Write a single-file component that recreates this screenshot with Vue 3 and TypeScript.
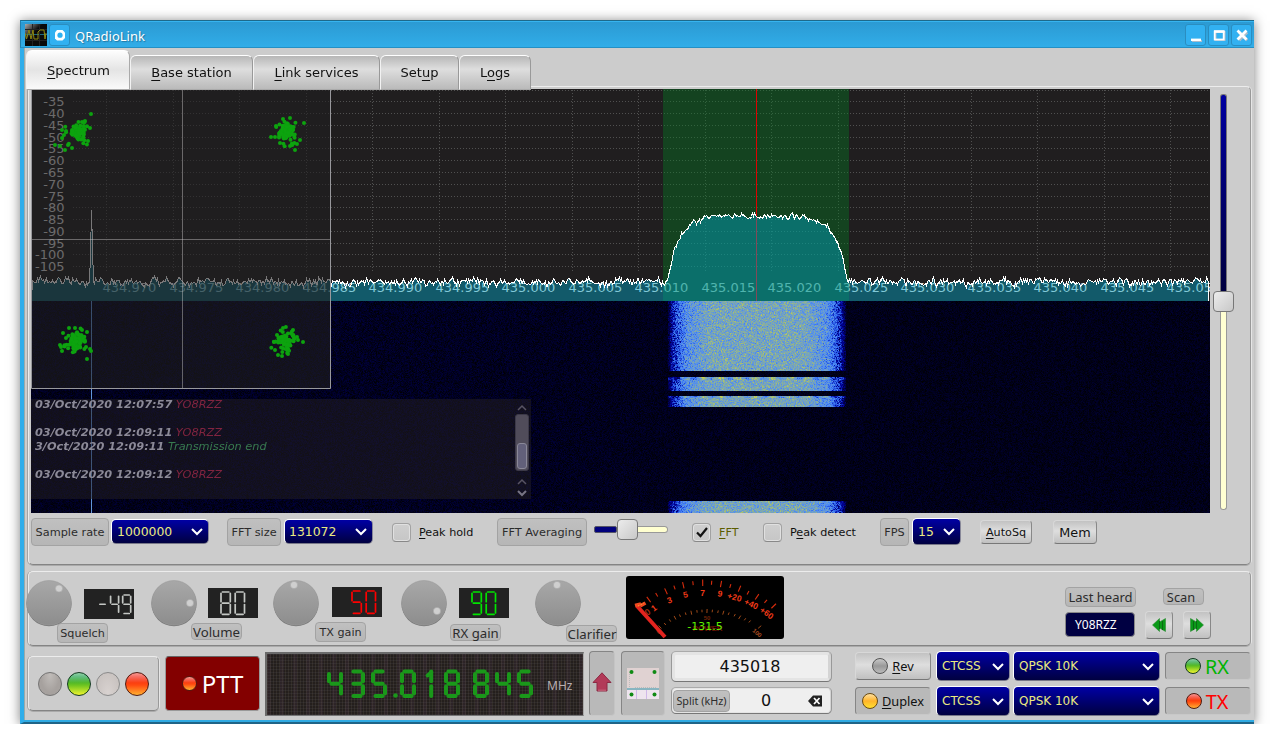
<script setup lang="ts">
import { onMounted, ref } from 'vue'

type Line = { x1: number; y1: number; x2: number; y2: number }
type Dot = { x: number; y: number }

function makeRandom(seed: number): () => number {
  let s = seed
  return () => {
    s = (s + 0x6d2b79f5) | 0
    let t = Math.imul(s ^ (s >>> 15), 1 | s)
    t = (t + Math.imul(t ^ (t >>> 7), 61 | t)) ^ t
    return ((t ^ (t >>> 14)) >>> 0) / 4294967296
  }
}

const tabs = [
  { key: 'S', rest: 'pectrum', cls: 'tab-spectrum active' },
  { key: 'B', rest: 'ase station', cls: 'tab-base' },
  { key: 'L', rest: 'ink services', cls: 'tab-link' },
  { pre: 'Set', key: 'u', rest: 'p', cls: 'tab-setup' },
  { pre: 'L', key: 'o', rest: 'gs', cls: 'tab-logs' },
]

/* Spectrum plot: 1179 x 212 */
const dbRows = Array.from({ length: 16 }, (_, i) => ({
  y: Math.floor(90 + i * 11.78) - 89 + 0.5,
  label: i === 0 ? '' : String(-30 - i * 5),
}))
const freqCols = Array.from({ length: 17 }, (_, i) => ({
  x: Math.round(106 + i * 66.5) - 31 + 0.5,
  label: (434.97 + i * 0.005).toFixed(3),
}))

function buildTrace(): string {
  const rnd = makeRandom(77)
  const pts: string[] = []
  let n = 0
  for (let x = 1; x <= 1177; x++) {
    const px = x + 31
    n = n * 0.35 + (rnd() + rnd() + rnd() - 1.5) * 0.9
    let y = 192.4 + n * 4.4
    if (px >= 667 && px <= 847) {
      const d = Math.min(px - 667, 847 - px)
      const top = 126.3 + 66 * Math.exp(-d / 11.5)
      y = top + n * (d > 3 ? 3.4 : 2)
    }
    if (px === 90) y = 165
    if (px === 91) y = 120.5
    if (px === 92) y = 157
    pts.push(`${x}.5,${(Math.round(y) + 0.5).toFixed(1)}`)
  }
  return pts.join(' ')
}
const trace = buildTrace()
const fillPoints = `0.5,212 ${trace} 1178,212`
const outline = `0.5,212 ${trace} 1177.5,212`

/* Constellation view: 300 x 300 */
function cluster(seed: number, cx: number, cy: number, extra: number[][]): Dot[] {
  const rnd = makeRandom(seed)
  const dots: Dot[] = []
  for (let i = 0; i < 72; i++) {
    const gx = rnd() + rnd() + rnd() + rnd() - 2
    const gy = rnd() + rnd() + rnd() + rnd() - 2
    dots.push({ x: cx + gx * 8.5, y: cy + gy * 9.5 })
  }
  for (const [x, y] of extra) dots.push({ x: x - 31, y: y - 89 })
  return dots
}
const constellation: Dot[] = [
  ...cluster(5, 47, 44, [[91, 114], [90, 128], [85, 121], [82, 122], [62, 130], [55, 145], [60, 146], [65, 150], [72, 148], [62, 138], [66, 131], [64, 135], [88, 141], [68, 145]]),
  ...cluster(9, 255, 43, [[290, 118], [304, 123], [295, 150], [271, 137], [275, 137], [300, 140], [297, 144], [283, 119], [276, 126], [280, 143], [290, 146]]),
  ...cluster(14, 45, 253, [[69, 328], [75, 328], [63, 333], [60, 345], [61, 347], [62, 351], [87, 359], [87, 332], [82, 330], [90, 349], [91, 351], [66, 338], [86, 347]]),
  ...cluster(21, 254, 253, [[283, 328], [293, 330], [303, 342], [274, 342], [278, 355], [282, 356], [288, 354], [297, 337], [277, 335], [275, 350], [298, 340]]),
]

/* Waterfall */
const waterfall = ref<HTMLCanvasElement | null>(null)
const palette: number[][] = [
  [0, 0, 0],
  [0, 0, 60],
  [0, 0, 150],
  [40, 90, 230],
  [76, 138, 246],
  [112, 160, 200],
  [146, 180, 140],
  [205, 212, 70],
]
function shade(v: number): number[] {
  const p = Math.max(0, Math.min(6.999, v))
  const i = Math.floor(p)
  const f = p - i
  return palette[i].map((c, k) => c + (palette[i + 1][k] - c) * f)
}
onMounted(() => {
  const cv = waterfall.value
  const ctx = cv?.getContext('2d')
  if (!cv || !ctx) return
  const w = 1179
  const h = 212
  const img = ctx.createImageData(w, h)
  const rnd = makeRandom(2020)
  for (let y = 0; y < h; y++) {
    const burst = y < 70 || (y >= 76 && y < 90) || (y >= 95 && y < 106) || y >= 200
    const edgeRow = (y >= 76 && y < 79) || (y >= 95 && y < 97)
    for (let x = 0; x < w; x++) {
      const px = x + 31
      let v: number
      const d = Math.min(px - 668, 845 - px)
      if (burst && d >= 0) {
        const level = d < 5 ? 1 + d * 0.3 : d < 18 ? 2.4 + (d - 5) * 0.14 : Math.min(5.2, 4.2 + (d - 18) * 0.045)
        v = level + (rnd() + rnd() - 1) * (d < 5 ? 0.9 : 1.5)
        if (edgeRow) v += Math.sin(px * 0.36) * 0.9
      } else {
        const near = Math.exp(-Math.pow((px - 400) / 260, 2))
        v = (rnd() + rnd() * 0.6) * (0.52 + near * 0.16)
      }
      if (px === 91) v = 4.3 + rnd() * 0.5
      const c = shade(v)
      const o = (y * w + x) * 4
      img.data[o] = c[0]
      img.data[o + 1] = c[1]
      img.data[o + 2] = c[2]
      img.data[o + 3] = 255
    }
  }
  ctx.putImageData(img, 0, 0)
})

const chat = [
  { time: '03/Oct/2020 12:07:57', text: 'YO8RZZ', kind: 'call' },
  { time: '', text: '', kind: '' },
  { time: '03/Oct/2020 12:09:11', text: 'YO8RZZ', kind: 'call' },
  { time: '3/Oct/2020 12:09:11', text: 'Transmission end', kind: 'end' },
  { time: '', text: '', kind: '' },
  { time: '03/Oct/2020 12:09:12', text: 'YO8RZZ', kind: 'call' },
]

/* Segment displays */
const segmentMap: Record<string, string> = {
  '0': 'abcdef', '3': 'abcdg', '4': 'bcfg', '5': 'acdfg', '8': 'abcdefg', '9': 'abcdfg', '-': 'g',
}
function segments(ch: string, x: number, y: number, w: number, h: number, gap: number): Line[] {
  if (ch === '1') {
    return [
      { x1: x + w * 0.6, y1: y, x2: x + w * 0.6, y2: y + h / 2 - gap },
      { x1: x + w * 0.6, y1: y + h / 2 + gap, x2: x + w * 0.6, y2: y + h },
      { x1: x + w * 0.3, y1: y + 4, x2: x + w * 0.6, y2: y + 1 },
    ]
  }
  const m = y + h / 2
  const all: Record<string, Line> = {
    a: { x1: x + gap, y1: y, x2: x + w - gap, y2: y },
    b: { x1: x + w, y1: y + gap, x2: x + w, y2: m - gap },
    c: { x1: x + w, y1: m + gap, x2: x + w, y2: y + h - gap },
    d: { x1: x + gap, y1: y + h, x2: x + w - gap, y2: y + h },
    e: { x1: x, y1: m + gap, x2: x, y2: y + h - gap },
    f: { x1: x, y1: y + gap, x2: x, y2: m - gap },
    g: { x1: x + gap, y1: m, x2: x + w - gap, y2: m },
  }
  return (segmentMap[ch] ?? '').split('').map((k) => all[k])
}
function lcdLines(text: string, x: number, y: number, w: number, h: number, pitch: number): Line[] {
  return text.split('').flatMap((ch, i) => segments(ch, x + i * pitch, y, w, h, 1.4))
}
const dials = [
  { cls: 'squelch', label: 'Squelch', value: '-49', dx: 33, dy: 8.5, color: '#c4c7c4', lines: lcdLines('-49', 14.5, 6, 8, 18.5, 12.1) },
  { cls: 'volume', label: 'Volume', value: '80', dx: 39, dy: 23, color: '#c4c7c4', lines: lcdLines('80', 13, 4, 9.3, 22.3, 14.2) },
  { cls: 'txgain', label: 'TX gain', value: '50', dx: 21, dy: 5, color: '#ff0000', lines: lcdLines('50', 20, 4, 9.3, 22.3, 14.2) },
  { cls: 'rxgain', label: 'RX gain', value: '90', dx: 36, dy: 31, color: '#00e400', lines: lcdLines('90', 13, 4, 9.3, 22.3, 14.2) },
  { cls: 'clarifier', label: 'Clarifier', value: '', dx: 22, dy: 5, color: '', lines: [] as Line[] },
]
const freqDigits: Line[] = [
  ['4', 62], ['3', 84], ['5', 106], ['0', 135], ['1', 157], ['8', 179], ['8', 208], ['4', 230], ['5', 252],
].flatMap(([ch, x]) => segments(String(ch), Number(x), 17.5, 12, 24.5, 2.4))

/* S-meter: 158 x 63 */
function tick(x: number, y: number, half: number): Line {
  const dx = x - 78
  const dy = y - 98
  const l = Math.hypot(dx, dy)
  return { x1: x - (dx / l) * half, y1: y - (dy / l) * half, x2: x + (dx / l) * half, y2: y + (dy / l) * half }
}
const outerTicks = [
  [22.7, 23.5], [30.7, 18.7], [40, 15.3], [48.5, 11.5], [57.3, 9.3], [67, 7.2], [76.7, 6.7], [85.6, 6.7],
  [95, 8], [104.3, 10], [113.5, 12.7], [122, 16.7], [131, 20.8], [139.7, 25.3], [147.7, 30],
].map(([x, y], i) => tick(x, y, i % 2 ? 2 : 3.2))
const innerTicks = [
  [34, 51], [39, 48], [44, 44.5], [49, 41.7], [54, 39.7], [59.7, 37.7], [65.3, 36.7], [71, 35.4], [76, 35], [81, 35],
  [86.3, 35], [92, 35.7], [97.3, 36.7], [102.7, 37.7], [108.7, 39.2], [113.7, 41.3], [119, 43.3], [123.7, 45.5], [133.7, 51],
].map(([x, y], i) => tick(x, y, i % 3 === 0 ? 2 : 1.3))
const meterLabels = [
  { t: '1', x: 28, y: 32, r: -36 },
  { t: '3', x: 43.5, y: 24, r: -20 },
  { t: '5', x: 59.5, y: 18.7, r: -12 },
  { t: '7', x: 76.7, y: 16.7, r: 0 },
  { t: '9', x: 94, y: 17.7, r: 8 },
  { t: '+20', x: 108.5, y: 21.2, r: 14 },
  { t: '+40', x: 125.2, y: 28, r: 24 },
  { t: '+60', x: 140.7, y: 37, r: 36 },
]
const radios = [
  { cls: 'rx', label: 'RX', led: 'green' },
  { cls: 'tx', label: 'TX', led: 'red' },
]
</script>

<template>
  <div class="window">
    <header class="titlebar">
      <svg class="app-icon" width="22" height="22" viewBox="0 0 22 22">
        <defs>
          <linearGradient id="gloss" x1="0" y1="0" x2="1" y2="1">
            <stop offset="0" stop-color="#aaa" />
            <stop offset=".4" stop-color="#0a0a0a" />
          </linearGradient>
        </defs>
        <rect width="22" height="22" fill="url(#gloss)" />
        <path d="M0 10.5H22" stroke="#1d6a80" />
        <path d="M7.5 0V22M14.500 0V22M0 5.500H22M0 16.500H22" stroke="#222" />
        <path d="M0 9l1.500 6 2.500-9 2 9 2-9 1 9h4V8l2-2h4l1 9 1-6" fill="none" stroke="#8f8a10" />
      </svg>
      <span class="tbtn tmenu">
        <svg width="20" height="20"><path d="M7 5h5.500l2.500 2.500v5.500l-2.500 2.500h-5.500l-2-2v-6z" fill="#fff" /><circle cx="10" cy="10.200" r="2.600" fill="#30b0f0" /></svg>
      </span>
      <span class="title">QRadioLink</span>
      <span class="spacer"></span>
      <span class="tbtn"><svg width="20" height="20"><path d="M6 16h10" stroke="#a9bccb" stroke-width="2" /><path d="M5 14.800h10" stroke="#fff" stroke-width="2.400" /></svg></span>
      <span class="tbtn"><svg width="20" height="20"><rect x="6.500" y="7" width="9" height="8" fill="none" stroke="#a9bccb" stroke-width="2" /><rect x="5.700" y="6.500" width="9" height="8" fill="none" stroke="#fff" stroke-width="1.800" /><path d="M5 6.500h10.500" stroke="#fff" stroke-width="2.500" /></svg></span>
      <span class="tbtn"><svg width="20" height="20"><path d="M6.500 6.500l8 8m0-8l-8 8" stroke="#a9bccb" stroke-width="3" transform="translate(.7 .8)" /><path d="M5.500 5.500l9 9m0-9l-9 9" stroke="#fff" stroke-width="2.800" /></svg></span>
    </header>

    <nav class="tabs">
      <div v-for="t in tabs" :key="t.rest" class="tab" :class="t.cls"><span>{{ t.pre }}<u>{{ t.key }}</u>{{ t.rest }}</span></div>
    </nav>

    <section class="pane frame">
      <div class="view-row">
        <div class="screen">
          <svg class="plot" width="1179" height="212" viewBox="0 0 1179 212">
            <rect width="1179" height="212" fill="#201e1f" />
            <g stroke="#505050" stroke-dasharray="1 2" shape-rendering="crispEdges">
              <line v-for="r in dbRows" :key="'h' + r.y" x1="42" :y1="r.y" x2="1179" :y2="r.y" />
              <line v-for="c in freqCols" :key="'v' + c.x" :x1="c.x" y1="1" :x2="c.x" y2="184" />
            </g>
            <g class="axis-text" fill="#dcdcdc">
              <text v-for="r in dbRows" :key="'t' + r.y" x="33.500" :y="r.y + 4.500" text-anchor="end">{{ r.label }}</text>
              <text v-for="c in freqCols" :key="'f' + c.x" :x="c.x - 4" y="203">{{ c.label }}</text>
            </g>
            <rect x="632" y="0" width="186" height="212" fill="rgba(2,130,35,.38)" />
            <rect x="725" y="0" width="1" height="212" fill="#e00000" />
            <polygon :points="fillPoints" fill="rgba(0,173,209,.42)" />
            <polyline :points="outline" fill="none" stroke="#fff" stroke-width="1" shape-rendering="crispEdges" />
          </svg>
          <canvas ref="waterfall" class="waterfall" width="1179" height="212"></canvas>

          <svg class="constellation" width="300" height="300" viewBox="0 0 300 300">
            <rect width="300" height="300" fill="rgba(32,30,31,.6)" />
            <path d="M151.500 0V299M0 150.500H299" stroke="rgba(200,200,200,.45)" />
            <path d="M.5 0V299.500H299.500V0" fill="none" stroke="#98989c" />
            <circle v-for="(d, i) in constellation" :key="i" :cx="d.x" :cy="d.y" r="2" fill="#0da30f" />
          </svg>

          <div class="chat">
            <div class="chat-lines">
              <p v-for="(c, i) in chat" :key="i"><b>{{ c.time }}</b> <i :class="c.kind">{{ c.text }}</i></p>
            </div>
            <div class="scrollbar">
              <svg width="10" height="7"><path d="M1 6l4-4 4 4" fill="none" stroke="#585464" stroke-width="1.500" /></svg>
              <div class="track"><div class="thumb"></div></div>
              <svg width="10" height="7"><path d="M1 6l4-4 4 4" fill="none" stroke="#585464" stroke-width="1.500" /></svg>
              <svg class="down" width="10" height="7"><path d="M1 1l4 4 4-4" fill="none" stroke="#777484" stroke-width="2" /></svg>
            </div>
          </div>
        </div>
        <div class="vslider">
          <div class="v-upper"></div>
          <div class="knob-handle"></div>
          <div class="v-lower"></div>
        </div>
      </div>

      <div class="controls">
        <span class="tag t-rate">Sample rate</span>
        <div class="combo c-rate"><span>1000000</span><svg width="14" height="9"><path d="M2 2l5 5 5-5" /></svg></div>
        <span class="tag t-size">FFT size</span>
        <div class="combo c-size"><span>131072</span><svg width="14" height="9"><path d="M2 2l5 5 5-5" /></svg></div>
        <span class="check k-hold"></span><span class="ctext x-hold"><u>P</u>eak hold</span>
        <span class="tag t-avg">FFT Averaging</span>
        <div class="hslider"><div class="h-left"></div><div class="knob-handle"></div><div class="h-right"></div></div>
        <span class="check k-fft"><svg width="17" height="17"><path d="M4 8.500l3.500 3.500L14 4" fill="none" stroke="#111" stroke-width="2.200" /></svg></span><span class="ctext x-fft"><u>F</u>FT</span>
        <span class="check k-detect"></span><span class="ctext x-detect">P<u>e</u>ak detect</span>
        <span class="tag t-fps">FPS</span>
        <div class="combo c-fps"><span>15</span><svg width="14" height="9"><path d="M2 2l5 5 5-5" /></svg></div>
        <button class="btn b-auto"><span><u>A</u>utoSq</span></button>
        <button class="btn b-mem">Mem</button>
      </div>
    </section>

    <section class="dials frame">
      <div v-for="d in dials" :key="d.cls" class="dial" :class="d.cls">
        <div class="dial-top">
          <svg width="46" height="47" viewBox="0 0 46 47">
            <defs>
              <linearGradient id="dialFace" x1="0" y1="0" x2="0" y2="1">
                <stop offset="0" stop-color="#a8a8a8" />
                <stop offset="1" stop-color="#8d8d8d" />
              </linearGradient>
            </defs>
            <circle cx="23" cy="23.700" r="22.600" fill="#777" />
            <circle cx="23" cy="22.800" r="22.300" fill="url(#dialFace)" stroke="#9c9c9c" stroke-width=".6" />
            <circle :cx="d.dx" :cy="d.dy" r="3.600" fill="#cfcfcf" stroke="#aaa" stroke-width=".6" />
          </svg>
          <svg v-if="d.value" class="lcd" width="50" height="30" role="img" :aria-label="d.value">
            <rect width="50" height="30" fill="#222" />
            <line v-for="(l, i) in d.lines" :key="i" v-bind="l" :stroke="d.color" stroke-width="1.700" stroke-linecap="round" />
          </svg>
        </div>
        <span class="tag dial-label">{{ d.label }}</span>
      </div>

      <svg class="meter" width="158" height="63" viewBox="0 0 158 63">
        <rect width="158" height="63" rx="3" fill="#000" />
        <g stroke="#d82c0c" stroke-width="1.100"><line v-for="(l, i) in outerTicks" :key="i" v-bind="l" /></g>
        <g stroke="#a04a18" stroke-width="1"><line v-for="(l, i) in innerTicks" :key="i" v-bind="l" /></g>
        <g class="meter-text" fill="#f03a18" font-size="8.500">
          <text v-for="m in meterLabels" :key="m.t" :transform="`translate(${m.x} ${m.y}) rotate(${m.r})`" y="3">{{ m.t }}</text>
        </g>
        <g class="meter-text" fill="#8a3414" font-size="6">
          <text x="81" y="43.500" fill="#702408">50</text>
          <text x="81.500" y="54.500" font-size="8" fill="#6a1404">POWER</text>
          <text transform="translate(131 57) rotate(40)" y="2" fill="#a84c20">100</text>
          <text transform="translate(21.500 36) rotate(-35)" y="3" font-size="9" fill="#a02c10">0</text>
          <text transform="translate(33 56) rotate(-35)" y="2" font-size="7">0</text>
        </g>
        <path d="M11 30L39 61" stroke="#e3241f" stroke-width="4" />
        <path d="M9 29.500l6-1.500M14 30l5.500-3" stroke="#f04a20" stroke-width="3.600" />
        <path d="M12 30l6-3" stroke="#f8a030" stroke-width="1" stroke-dasharray="1.500 1.500" />
        <text class="meter-value" x="79" y="54" text-anchor="middle" fill="#5cf000">-131.5</text>
      </svg>

      <div class="heard">
        <span class="tag">Last heard</span>
        <div class="callsign">Y08RZZ</div>
      </div>
      <div class="scan">
        <span class="tag">Scan</span>
        <div class="scan-buttons">
          <button class="btn"><svg width="14" height="14" viewBox="0 0 14 14"><path d="M7.500 0.500L0.500 7l7 6.500V10l6 3.500V.5l-6 3.500z" fill="#0a9a18" stroke="#2f8a36" stroke-width=".6" /><path d="M7.500 3v8M10.500 3v9" stroke="#0b6a14" /></svg></button>
          <button class="btn"><svg width="14" height="14" viewBox="0 0 14 14"><path d="M6.500 0.500L13.500 7l-7 6.500V10l-6 3.500V.5l6 3.500z" fill="#0a9a18" stroke="#2f8a36" stroke-width=".6" /><path d="M6.500 3v8M3.500 3v9" stroke="#0b6a14" /></svg></button>
        </div>
      </div>
    </section>

    <footer class="bottom">
      <div class="leds frame">
        <i class="led gray"></i><i class="led green"></i><i class="led pale"></i><i class="led red"></i>
      </div>
      <button class="ptt"><i class="led red small"></i><span>PTT</span></button>
      <div class="freq">
        <svg width="277" height="60" role="img" aria-label="435.018 845">
          <line v-for="(l, i) in freqDigits" :key="i" v-bind="l" stroke="#1a981a" stroke-width="4" stroke-linecap="round" />
          <circle cx="128.500" cy="41.500" r="2.300" fill="#1a981a" />
        </svg>
        <span>MHz</span>
      </div>
      <div class="sunken b-up"><svg width="20" height="20" viewBox="0 0 20 20"><path d="M10 .8l9 9.700h-4V19H5v-8.500H1z" fill="#b23a58" stroke="#8c2a44" /><path d="M6 18.200h8" stroke="#c86a80" /></svg></div>
      <div class="sunken b-const">
        <svg width="32" height="31" viewBox="0 0 32 31">
          <rect width="32" height="20" fill="#e0d2d2" /><rect y="22" width="32" height="9" fill="#eee4ee" /><path d="M0 21H32" stroke="#58b0c8" />
          <path d="M2.500 4V19M8 19.500H30" stroke="#bbb" stroke-dasharray="1 1" /><path d="M9.500 22v9M19.500 22v9" stroke="#d0b8e8" />
          <g fill="#108a14"><circle cx="4.500" cy="4" r="2" /><circle cx="27.500" cy="4" r="2" /><circle cx="4.500" cy="26.500" r="2" /><circle cx="27.500" cy="26.500" r="2" /></g>
        </svg>
      </div>
      <div class="entries">
        <div class="entry main-entry"><span>435018</span></div>
        <div class="entry split-entry">
          <span class="tag">Split (kHz)</span><span class="num">0</span>
          <svg width="14" height="12" viewBox="0 0 14 12"><path d="M0 6L5 0.500h9v11H5z" fill="#222" /><path d="M6 3l5.500 6m0-6L6 9" stroke="#fff" stroke-width="1.700" /></svg>
        </div>
      </div>
      <div class="col modes">
        <button class="btn"><i class="led off mid"></i><span><u>R</u>ev</span></button>
        <div class="sunken"><i class="led amber mid"></i><span><u>D</u>uplex</span></div>
      </div>
      <div class="col tones">
        <div v-for="n in 2" :key="n" class="combo"><span>CTCSS</span><svg width="14" height="9"><path d="M2 2l5 5 5-5" /></svg></div>
      </div>
      <div class="col mods">
        <div v-for="n in 2" :key="n" class="combo"><span>QPSK 10K</span><svg width="14" height="9"><path d="M2 2l5 5 5-5" /></svg></div>
      </div>
      <div class="col radios">
        <div v-for="r in radios" :key="r.cls" class="sunken" :class="r.cls"><i class="led mid" :class="r.led"></i><span>{{ r.label }}</span></div>
      </div>
    </footer>
  </div>
</template>

<style>
html, body { background: #fff; overflow: hidden; }
</style>

<style scoped>
* { box-sizing: border-box; }
svg, canvas { display: block; flex: none; }
u { text-decoration: underline; text-underline-offset: 2px; text-decoration-thickness: 1px; }
.window {
  margin: 20px 0 0 20px; width: 1234px; height: 704px; background: #cccccc;
  border-left: 4px solid #2fadea; border-bottom: 2px solid #1f6487;
  box-shadow: 0 1px 11px rgba(0, 0, 0, .5), inset 0 -2px 0 #30aae2, inset 1px 0 0 #9aa;
  font-family: "DejaVu Sans", sans-serif; font-size: 12px; color: #111;
  display: flex; flex-direction: column;
}
.titlebar {
  flex: none; height: 28px; margin-left: -4px; display: flex; align-items: flex-start;
  background: linear-gradient(#2b99d2, #31ade8); border-top: 1px solid #1d6a8c; border-left: 1px solid #1f7fae; border-bottom: 1px solid #2490c4;
  box-shadow: inset 0 1px 0 #36b4f0; padding: 3px 2px 0 4px;
}
.app-icon { margin-right: 2px; }
.tbtn { width: 21px; height: 22px; background: #32b1f1; border: 1px solid #2a8dc0; border-radius: 3px; margin-right: 2px; }
.tbtn:last-child { margin-right: 0; }
.title { font: 13px/24px "Noto Sans", sans-serif; color: #fff; margin-left: 3px; text-shadow: 1px 1px 1px rgba(0, 0, 0, .3); }
.spacer { flex: 1; }

.tabs { flex: none; height: 42px; display: flex; align-items: flex-end; padding-left: 2px; position: relative; z-index: 1; }
.tab {
  height: 35px; border-radius: 6px 6px 0 0; font-size: 13px; display: flex; align-items: center; justify-content: center;
  background: linear-gradient(#b7b7b7, #dedede 40%, #bababa); border-top: 1.500px solid #fff; border-left: 1px solid #f2f2f2; border-right: 1px solid #999;
  border-bottom: 1px solid #aaa;
}
.tab u { text-underline-offset: 3px; }
.tab.active { height: 40px; background: linear-gradient(#fdfdfd, #e4e4e4 50%, #fafafa); border-right: 1px solid #aaa; padding-left: 1px; }
.tab-spectrum { width: 104px; }
.tab-base { width: 123px; }
.tab-link { width: 127px; }
.tab-setup { width: 79px; }
.tab-logs { width: 72px; }

.frame { border: 1px solid #ececec; border-bottom-color: #848484; border-right-color: #999; border-radius: 5px; box-shadow: 0 1px 0 #aaa, -1px 0 0 #a4a4a4, 1px 0 0 #e6e6e6; }
.pane { flex: none; margin: -4px 0 0 4px; width: 1223px; height: 479px; padding: 2px 0 0 2px; }
.view-row { display: flex; height: 424px; }
.screen { position: relative; width: 1179px; height: 424px; flex: none; }
.axis-text { font: 13px "DejaVu Sans", sans-serif; }
.constellation { position: absolute; left: 0; top: 0; }
.chat {
  position: absolute; left: 0; top: 310px; width: 500px; height: 100px; background: rgba(32, 29, 34, .55);
  display: flex; justify-content: space-between; overflow: hidden;
}
.chat-lines { padding: 0 0 0 4px; margin-top: -1px; font-size: 11.300px; }
.chat p { margin: 0; height: 14px; line-height: 14px; font-style: italic; white-space: pre; color: #8c8a98; }
.chat .call { color: #80243f; }
.chat .end { color: #387a50; }
.scrollbar { width: 14px; margin-right: 2px; padding-top: 5px; display: flex; flex-direction: column; align-items: center; }
.track { width: 14px; height: 57px; margin: 3px 0 7px; background: #504c5a; border: 1px solid #3c3948; border-radius: 3px; display: flex; align-items: flex-end; justify-content: center; padding-bottom: 1px; }
.thumb { width: 10px; height: 26px; border: 1px solid #8a8898; border-radius: 3px; background: #62607a; }
.down { margin-top: 5px; }

.vslider { width: 23px; margin-left: 2px; padding-top: 5px; display: flex; flex-direction: column; align-items: center; }
.v-upper { width: 7px; height: 197px; background: linear-gradient(#0000a0, #000040); border: 1px solid #777; border-radius: 3px 3px 0 0; border-bottom: 0; }
.v-lower { width: 7px; height: 198px; background: #ffffd2; border: 1px solid #999; border-top: 0; border-radius: 0 0 3px 3px; }
.knob-handle { width: 21px; height: 21px; border: 1px solid #777; border-radius: 4px; background: linear-gradient(135deg, #ececec, #c8c8c8); flex: none; }

.controls { display: flex; align-items: center; height: 28px; margin-top: 5px; }
.tag {
  display: flex; align-items: center; justify-content: center; background: linear-gradient(#c0c0c0, #b6b6b6); border: 1px solid #a3a3a3;
  border-radius: 4px; color: #2c2c2c; white-space: nowrap;
}
.controls .tag { height: 28px; font-size: 11.300px; flex: none; }
.t-rate { width: 78px; }
.t-size { width: 54px; margin-left: 18px; }
.t-avg { width: 90px; margin-left: 22px; }
.t-fps { width: 29px; margin-left: 23px; }
.combo {
  display: flex; align-items: center; justify-content: space-between; padding: 0 4px 0 5px; border-radius: 5px; color: #eaea80;
  background: linear-gradient(#0000a4, #000040); border: 1px solid #fff; border-right-color: #889; border-bottom-color: #778; flex: none;
}
.combo path { fill: none; stroke: #fff; stroke-width: 2; }
.controls .combo { height: 25px; margin-left: 2px; margin-top: -1px; font-size: 12.400px; }
.controls .c-rate { width: 98px; }
.controls .c-size { width: 89px; margin-left: 3px; padding-left: 4px; }
.controls .c-fps { width: 49px; height: 27px; margin-left: 3px; }
.check { width: 19px; height: 19px; border: 1px solid #a2a2a2; border-bottom-color: #888; border-radius: 4px; background: linear-gradient(#cfcfcf, #c6c6c6); box-shadow: inset 0 0 0 1px #e0e0e0; flex: none; }
.ctext { font-size: 11.200px; margin-left: 8px; white-space: nowrap; flex: none; }
.x-hold { width: 56px; }
.x-fft { width: 20px; color: #5c5c00; }
.x-detect { width: 67px; }
.k-hold { margin-left: 19px; }
.k-fft { margin-left: 24px; }
.k-detect { margin-left: 24px; }
.hslider { display: flex; align-items: center; width: 74px; margin: -5px 0 0 7px; flex: none; }
.h-left { width: 23px; height: 7px; background: #00007c; border: 1px solid #556; border-radius: 2px; }
.h-right { width: 30px; height: 7px; background: #ffffd0; border: 1px solid #999; border-left: 0; border-radius: 0 4px 4px 0; }
.btn {
  display: flex; align-items: center; justify-content: center; padding: 0; border-radius: 4px; font: 11.200px "DejaVu Sans", sans-serif; color: #111;
  background: linear-gradient(#c2c2c2, #dedede 45%, #c0c0c0); border: 1px solid #d8d8d8; border-bottom-color: #777; border-right-color: #888; flex: none;
}
.b-auto { width: 52px; height: 24px; margin-left: 19px; }
.b-mem { width: 44px; height: 24px; margin-left: 21px; font-size: 12.800px; }

.dials { flex: none; margin: 6px 0 0 4px; width: 1223px; height: 75px; display: flex; align-items: flex-start; padding-top: 8px; }
.dial { flex: none; }
.dial-top { display: flex; align-items: flex-start; height: 47px; }
.lcd { margin: 8px 0 0 12px; }
.dial-label { width: 51px; height: 17px; font: 13.200px "Noto Sans", sans-serif; }
.squelch { width: 125px; margin-left: -3px; }
.squelch .lcd { margin-top: 9px; }
.squelch .dial-label { margin: -4px 0 0 31px; height: 20px; font: 11.200px "DejaVu Sans", sans-serif; }
.volume { width: 122px; }
.volume .lcd { margin-left: 11px; }
.volume .dial-label { margin: -4px 0 0 40px; }
.txgain { width: 128px; }
.txgain .lcd { margin: 7px 0 0 13px; }
.txgain .dial-label { margin: -5px 0 0 42px; height: 20px; font: 11.200px "DejaVu Sans", sans-serif; }
.rxgain { width: 134px; }
.rxgain .dial-label { margin: -3px 0 0 49px; }
.clarifier { width: 91px; }
.clarifier .dial-label { margin: -2px 0 0 31px; padding-left: 1px; }
.meter { margin-top: -4px; }
.meter-text { font-family: "Liberation Sans", sans-serif; font-weight: bold; text-anchor: middle; }
.meter-value { font: 11px "DejaVu Sans", sans-serif; }
.heard { margin: 7px 0 0 281px; width: 72px; }
.heard .tag { height: 20px; width: 71px; font: 13px "Noto Sans", sans-serif; }
.callsign { margin: 5px 0 0 0; width: 70px; height: 25px; background: #000042; border: 1px solid #888; border-radius: 4px; color: #fff; font: 12px/23px "Noto Sans", sans-serif; padding-left: 9px; }
.scan { margin: 7px 0 0 8px; }
.scan .tag { width: 41px; height: 17px; margin: 1px 0 0 18px; font: 12.800px "Noto Sans", sans-serif; padding-right: 5px; }
.scan-buttons { display: flex; gap: 10px; margin-top: 6px; }
.scan-buttons .btn { width: 28px; height: 28px; }

.bottom { flex: none; height: 66px; margin: 5px 0 0 3px; display: flex; align-items: flex-start; }
.leds { width: 131px; height: 55px; margin: 5px 0 0 1px; display: flex; align-items: center; gap: 5px; padding-left: 9px; }
.led { width: 24px; height: 24px; border-radius: 50%; border: 1.500px solid #333; flex: none; }
.led.small { width: 15px; height: 15px; border-width: 1px; }
.led.mid { width: 16px; height: 16px; border-width: 1px; }
.led.gray { background: radial-gradient(ellipse at 50% 10%, #c0bcb9, transparent 60%), #a6a19e; border-color: #757575; }
.led.pale { background: radial-gradient(ellipse at 50% 90%, #d8d2d0, #c4bebb); border-color: #8a8a8a; }
.led.off { background: linear-gradient(#c8c8c8, #999 50%, #bbb); border-color: #555; }
.led.green { background: linear-gradient(rgba(255, 255, 255, .55), transparent 45%), linear-gradient(#109a40 15%, #6cc420 55%, #f0f430); border-color: #123a20; }
.led.red { background: linear-gradient(rgba(255, 255, 255, .55), transparent 45%), linear-gradient(#f02010 15%, #ff4a10 55%, #ffb030); border-color: #501a10; }
.led.amber { background: linear-gradient(#ffe0a0, #ffb42a 50%, #ffe030); border-color: #6a4a10; }
.ptt { width: 95px; height: 55px; margin: 5px 0 0 6px; background: #830000; border: 1px solid #999; border-top-color: #666; border-radius: 4px; color: #fff; font: 24px "Noto Sans", sans-serif; display: flex; align-items: center; justify-content: center; gap: 5px; padding: 0; }
.freq {
  width: 319px; height: 64px; margin: 1px 0 0 5px; border: 2px solid #6a6a6a; border-right: 1px solid #aaa; border-bottom: 1px solid #777; display: flex;
  background-color: #241f1d; color: #b8aeb0; font: 12px "Noto Sans", sans-serif;
  background-image: repeating-linear-gradient(90deg, rgba(120, 110, 90, .17) 0 1px, transparent 1px 3px), repeating-linear-gradient(0deg, rgba(90, 90, 100, .17) 0 1px, transparent 1px 3px), repeating-linear-gradient(90deg, rgba(90, 60, 90, .16) 0 4px, transparent 4px 13px);
}
.freq span { margin-top: 23px; margin-left: 3px; }
.sunken { display: flex; align-items: center; justify-content: center; background: #b9b9b9; border: 1px solid #858585; border-right-color: #c4c4c4; border-bottom-color: #c8c8c8; border-radius: 4px; flex: none; }
.b-up { width: 26px; height: 65px; margin-left: 5px; }
.b-up svg { margin-top: -4px; }
.b-const { width: 44px; height: 65px; margin-left: 6px; }
.entries { margin: 1px 0 0 7px; width: 159px; }
.entry { background: #efefef; border: 3px solid #e4e4e4; border-right-color: #d4d4d4; border-radius: 4px; box-shadow: 0 1px 0 #777, 0 -1px 0 #aaa, 1px 0 0 #999, -1px 0 0 #999; display: flex; align-items: center; font-size: 16px; }
.main-entry { height: 29px; justify-content: center; padding-right: 3px; }
.split-entry { height: 25px; margin-top: 7px; border-width: 1px; }
.split-entry .tag { width: 57px; height: 22px; font: 10.800px "Noto Sans", sans-serif; }
.num { margin-left: 31px; width: 10px; }
.split-entry svg { margin-left: 37px; }
.col { display: flex; flex-direction: column; gap: 5px; }
.modes { margin-left: 24px; width: 76px; gap: 7px; padding-top: 1px; }
.modes > * { height: 28px; gap: 4px; font: 12.800px "Noto Sans", sans-serif; }
.tones { margin-left: 5px; width: 74px; }
.mods { margin-left: 3px; width: 147px; }
.col .combo { height: 30px; font-size: 12px; }
.radios { margin-left: 5px; width: 86px; gap: 7px; padding-top: 1px; }
.radios > * { height: 28px; gap: 4px; padding-right: 2px; font: 19.800px "Noto Sans", sans-serif; }
.rx { color: #00b400; }
.tx { color: #f00; }
</style>
